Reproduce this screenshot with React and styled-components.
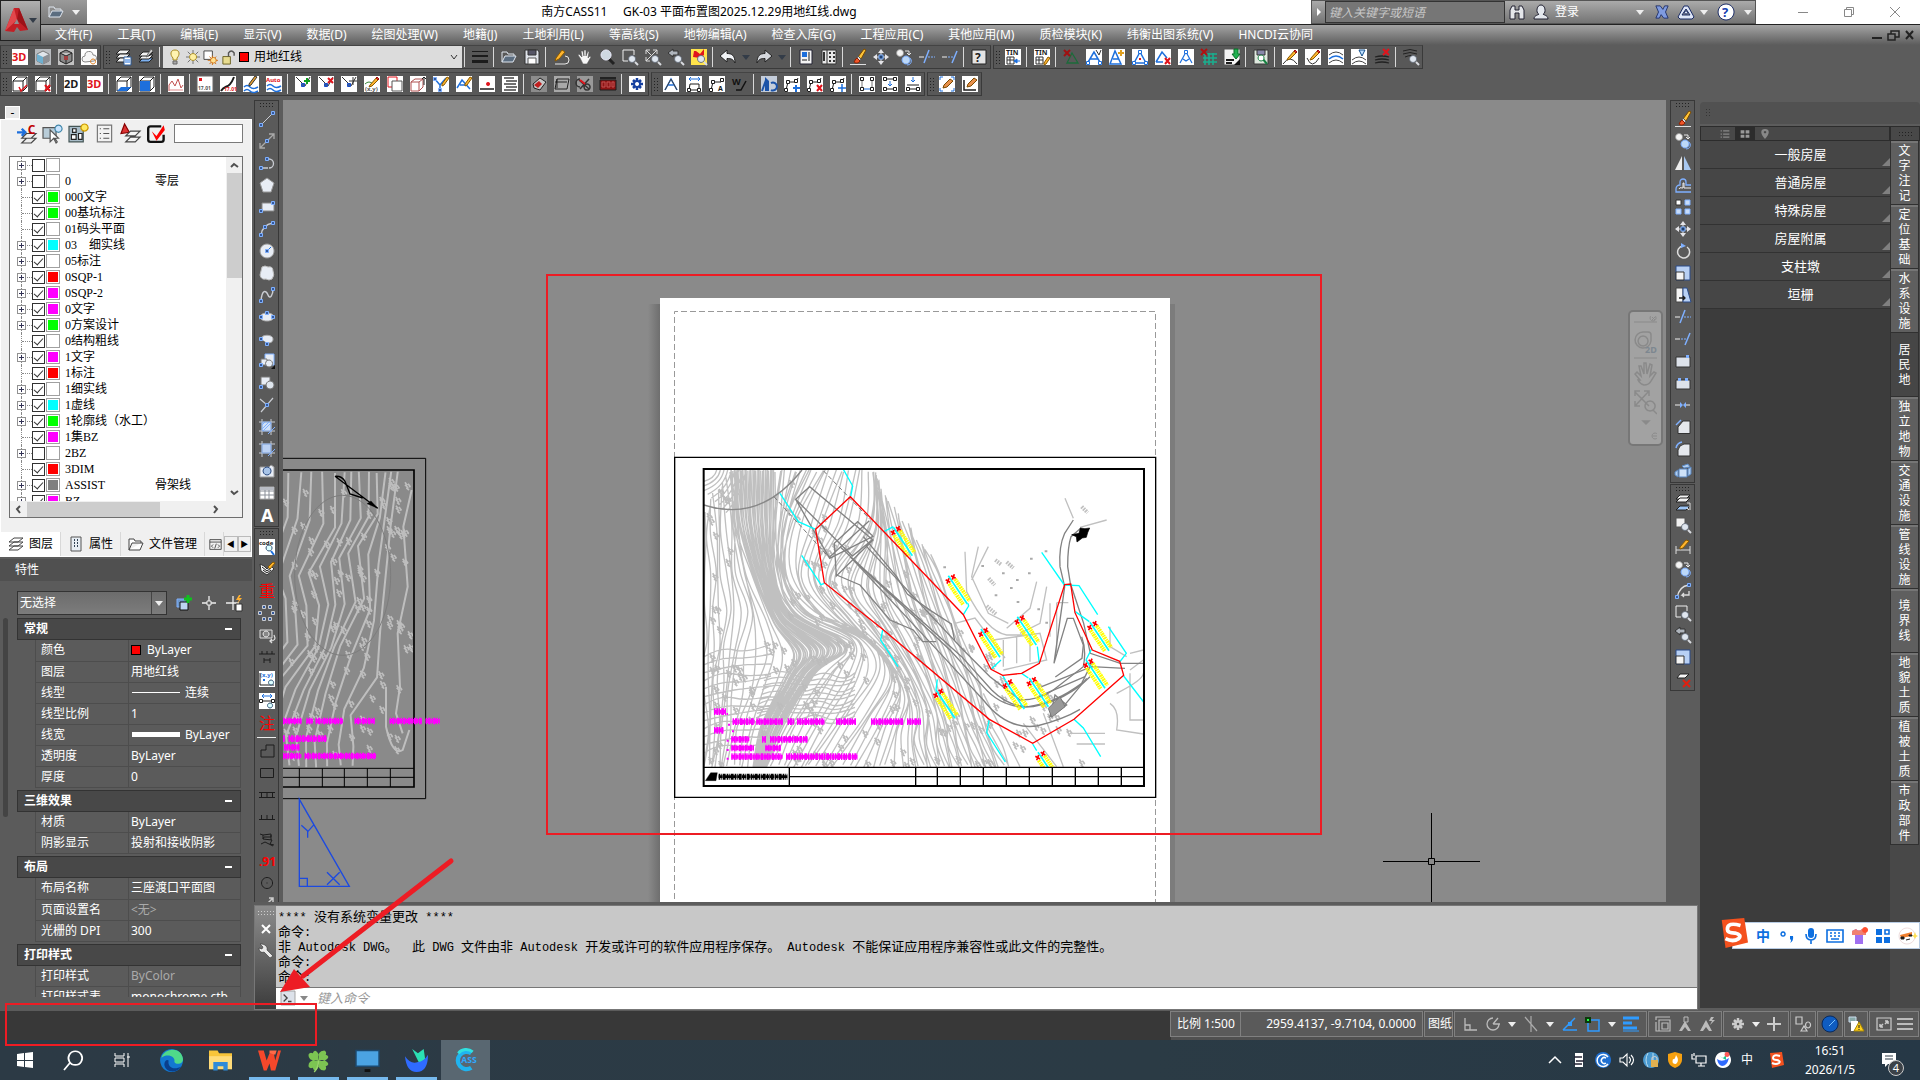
import React, { useState } from "react";
import styled, { createGlobalStyle, css } from "styled-components";

const GlobalStyle = createGlobalStyle`
  *, *::before, *::after { box-sizing: border-box; }
  body {
    margin: 0;
    overflow: hidden;
    background: #5c5c5c;
    font-family: "Noto Sans", "Noto Sans CJK SC", sans-serif;
    font-size: 12px;
    line-height: 16px;
  }
  button, input, select { font: inherit; color: inherit; }
  button { margin: 0; padding: 0; border: 0; background: none; }
  svg { display: block; flex: none; }
  table { border-collapse: collapse; }
  ul { list-style: none; margin: 0; padding: 0; }
`;

// ---------------------------------------------------------------- icons
// every shape is [path, stroke, fill, strokeWidth] or { t, x, y, s, c } for a text

const K = "#1c1c1c";
const G = "#c9ccd2";
const B = "#1d6fdc";
const LB = "#7fb0ff";
const R = "#e0141c";
const P = "#e8edf5";

const tile = ["M0 0h16v16H0z", null, "#fff"];
const lens = [
  ["M13 13l3 3", "#d8dbe0", null, 2],
  ["M10 6.500a3.500 3.500 0 1 0 .1 0z", "#6c7480", "#dfe6ef"],
];
const pencil = [
  ["M6 9L13 1l2 2-7 7-3 1z", "#8a5a00", "#ffb52e"],
  ["M12 2l1-1 2 2-1 1z", "#a01010", "#e8432c"],
];
const redX = ["M10 9l5 6M15 9l-5 6", R, null, 2];
const node = (x, y, c = K) => [`M${x - 1.5} ${y - 1.5}h3v3h-3z`, c, "#fff"];
const dot = (x, y, c = LB) => [`M${x - 1.5} ${y - 1.5}h3v3h-3z`, c, "#355a9c"];
const box = [
  ["M1 5h10v10H1zM1 5l4-4h10l-4 4M15 1v10l-4 4", K, null],
];
const layer = (y, f = "#f2f2f2") => [`M5 ${y}h10l-4 4H1z`, "#222", f];
const copyCircles = [
  ["M4 0.500a3.500 3.500 0 1 0 .1 0z", "#999", "#f4f4f4"],
  ["M9 2h4v4m-2-2l2 2 2-2", "#e8e8e8", null],
  ["M10 7a4 4 0 1 0 .1 0z", LB, "#bcd8f8"],
  ["M14 9a4 4 0 0 1-3 7", LB, null],
];
const moveArrows = [
  ["M8 0l3 4H5zM8 16l3-4H5zM0 8l4-3v6zM16 8l-4-3v6z", null, "#e4e4e8"],
  ["M8 3v10M3 8h10", "#e4e4e8", null],
  ["M6 6h4v4H6z", LB, "#20406c"],
];
const brush = [
  ["M8 8l6-8 2 1-5 9z", "#7a4a00", "#ffc438"],
  ["M8 7l3 3-1 2-3-3z", "#555", "#ddd"],
  ["M7 9l3 3c-2 3-5 2-6 1 1-1 1-3 3-4z", "#8c2000", "#f0562a"],
  ["M0 15.500h16", "#e0e0e0", null],
];
const contour = (y) => [`M1 ${y}q7-6 14 0`, "#444", null];
const poly = [["M2 14L4 6h8l2-4", K, null], node(2, 14), node(4, 6), node(12, 5)];
const vbase = [["M1 1l9 9 5-9", "#333", null], dot(8, 9, "#1a4ec8")];

const ICONS = {
  t3d: [tile, { t: "3D", x: 0, y: 12, s: 11, c: R }],
  t2d: [tile, { t: "2D", x: 0, y: 12, s: 11, c: K }],
  cube: [["M0 0h16v16H0z", null, "#b9bcc0"], ["M2 5l6-3 6 3v7l-6 3-6-3z", "#777", "#e0e5ea"], ["M2 5l6 3v7l-6-3z", null, "#6fb0d0"], ["M8 8l6-3v7l-6 3z", null, "#8c8f94"]],
  cube2: [["M0 0h16v16H0z", null, "#c2c2c2"], ["M2 4l6-3 6 3v8l-6 3-6-3zM2 4l6 3 6-3M8 7v8", "#222", "#888"], ["M6 7h4v4H6z", null, "#a04040"]],
  cloud: [tile, ["M4 13a3 3 0 0 1 0-6 4 4 0 0 1 8-1 3 3 0 0 1 1 6z", "#888", "#f6f6f6"], ["M12 10a2.500 2.500 0 1 0 .1 0z", "#e08020", null]],
  layers: [layer(1), layer(5), layer(9), ["M9 8h7v8H9z", "#2a5a9a", "#fff"], ["M10 11h5M10 13h5", B, null]],
  layers2: [layer(9, "#7db0ee"), layer(6), layer(3), ["M13 0l2 2-5 5-2 1z", "#666", "#ccc"]],
  weight: [["M0 2.500h16", K, null, 1], ["M0 7h16", K, null, 2], ["M0 12.500h16", K, null, 3]],
  open: [["M1 13V3h5l1 2h6v2", "#dfe6ef", null], ["M1 13l3-6h11l-3 6z", "#dfe6ef", "#5b6d80"]],
  save: [["M1 1h13l1 2v12H1z", "#333", "#dfe3ea"], ["M4 1h8v5H4z", "#333", "#556"], ["M4 9h8v6H4z", "#555", "#fff"]],
  pencil: [["M2 15h10a4 4 0 0 0 0-8", "#e8e8e8", null], ["M3 9L9 1l3 2-6 7-4 2z", "#8a5a00", "#ffb52e"]],
  hand: [["M4 9L2 6l1-1 3 3-1-6h2l1 5V1h2v6l2-5 1 1-1 6 2-2 1 1-4 7H7z", "#555", "#f6f6f6", 0.6]],
  zoom: [["M10 10l5 5", "#222", null, 3], ["M7 1a5 5 0 1 0 .1 0z", "#eef", "#cfd8e2"]],
  zoomWin: [["M1 1h11v5M1 1v11h5", "#eee", null], ...lens],
  zoomExt: [["M1 1l12 12M12 1L1 12M1 5V1h4M8 1h4v4M1 8v4h4", "#ddd", null], ...lens],
  zoomPrev: [["M0 4l5-4v2h5v4H5v2z", "#333", "#aeb4bc"], ...lens],
  zoomRed: [["M0 0h16v16H0z", null, "#ffe34a"], ["M2 8l1-6h2l4 3 4-5v6l-4 3z", null, R], ...lens],
  undo: [["M0 7l7-6v3.500c5 0 8 2 8 9.500-2-4-4-4.500-8-4.500V13z", "#222", "#f0f2f5"]],
  redo: [["M16 7L9 1v3.500c-5 0-8 2-8 9.500 2-4 4-4.500 8-4.500V13z", "#222", "#d4d7dc"]],
  calc: [["M2 1h12v14H2z", "#223", "#f4f4f4"], ["M4 3h5v5H4z", null, B], ["M11 3v9M4 11h5", K, null]],
  palette: [["M1 1h14v14H1z", "#333", "#e8e8e8"], ["M6 1v14", "#333", null], ["M3 3v9M8 4h2M12 4h2M8 8h2M12 8h2M8 12h2M12 12h2", "#333", null, 2]],
  brush,
  move: moveArrows,
  copy: copyCircles,
  trim: [["M0 8h5", "#eee", null], ["M9 8h2M12 8h2M15 8h1", LB, null], ["M5 14L10 1", LB, null, 1.5]],
  extend: [["M0 8h5", "#eee", null], ["M6 8h2M9 8h2", LB, null], ["M10 14L15 2", LB, null, 1.5]],
  help: [["M1 1h14v14H1z", "#222", "#e4e4e4"], { t: "?", x: 4, y: 13, s: 12, c: K }],
  tin: [tile, { t: "TIN", x: 1, y: 6, s: 7, c: K }, ["M2 8h7v7H2zM2 11h7M5 8v7", "#333", null], ["M9 12h6m-6 0l3-2v4z", B, B]],
  tinPen: [tile, { t: "TIN", x: 1, y: 6, s: 7, c: K }, ["M2 8h7v7H2zM2 11h7M5 8v7", "#333", null], ["M10 14l4-6 2 1-4 6-2 1z", "#8a5a00", "#ffb52e"]],
  triX: [["M4 14l5-10 6 10z", "#1b6b3a", null, 1.3], ["M1 1l6 6M7 1L1 7", "#a01010", null, 2]],
  triA: [tile, ["M1 15L8 3l7 12M4 10h8", B, null, 1.5], ["M10 1l3 5 2-5", "#333", null], node(2, 14, B), node(14, 14, B)],
  triB: [tile, ["M1 15L6 2l6 13zM4 10h6", B, null, 1.5], ["M12 1v6M9 4h6", "#e0a020", null, 2]],
  triC: [tile, ["M2 14L8 3l6 11z", B, null, 1.5], node(8, 3, B), node(2, 14, B), node(14, 14, B), ["M7 9h2v2H7z", null, R]],
  triD: [tile, ["M1 13L7 3l5 6M1 13h7", B, null, 1.5], redX],
  triE: [tile, ["M2 14L8 3l6 11M5 10l3 2 3-2", B, null, 1.2], node(8, 3, B)],
  grid: [["M2 5h14M2 9h14M2 13h14M4 4v12M8 4v12M12 4v12", "#19b090", null, 1.5], ["M0 0l6 6M6 0L0 6", "#b01010", null, 2]],
  down: [["M0 0h16v16H0z", "#555", "#f4f4f4"], ["M10 0h4v5h2l-4 5-4-5h2z", "#087028", "#20b050"], ["M2 11h8M2 14h6", K, null, 2], ["M16 10v6h-6z", null, "#111"]],
  diskLens: [["M1 1h14v14H1z", "#3a3a3a", "#dfe9df"], ["M4 1h8v5H4z", "#333", "#88a"], ["M9 9l5 6", "#158040", null, 2], ["M8 6a3 3 0 1 0 .1 0z", "#158040", "#fff"]],
  penCurve: [tile, ["M1 15q7-10 14 0", "#333", null], ...pencil],
  penCirc: [tile, ["M2 9q5 12 12 0", "#333", null], ...pencil],
  arcs: [tile, contour(6), ["M1 10q7-6 14 0", B, null, 1.5], contour(14)],
  arcsV: [tile, contour(11), contour(15), ["M8 1h6l-3 6z", "#124e8c", "#bfe0ff"]],
  arcsX: [["M1 8q7-2 14 0M1 11q7-2 14 0M1 14q7-2 14 0", "#222", null, 1.3], ["M9 0l6 6M15 0L9 6", R, null, 2]],
  arcsL: [["M0 2q7-3 14 0M0 5q7-3 14 0M2 8q7-3 10 0", "#222", null], ...lens],

  boxCheck: [tile, ...box, ["M7 11l2 4 6-6", R, null, 1.5]],
  boxX: [tile, ...box, redX],
  boxBase: [tile, ...box, ["M1 15l4-4h10l-4 4z", null, B]],
  boxFront: [tile, ...box, ["M1 5h10v10H1z", null, B]],
  chart: [tile, ["M1 15V9l3-4 3 5 3-7 3 9 2-3", "#c05050", null], ["M1 14h14", "#d88", null]],
  ptNum: [["M0 0h16v16H0z", "#666", "#fff"], ["M2 2h3v3H2z", null, R], { t: "17.01", x: 1, y: 14, s: 5, c: "#555" }],
  curveNum: [tile, ["M1 15C5 8 9 14 14 1", K, null, 2], { t: "17.01", x: 4, y: 15, s: 5, c: R }],
  wavePen: [tile, ["M1 11q3-3 6 0t8 0M1 15q3-3 6 0t8 0", B, null, 1.5], ["M6 8l6-8 2 1-6 8-2 1z", "#333", "#e8a030"]],
  waveAuto: [tile, { t: "Auto", x: 0, y: 6, s: 6, c: R }, ["M1 10q3-3 6 0t8 0M1 14q3-3 6 0t8 0", B, null, 1.5]],
  vPlus: [tile, ...vbase, ["M12 2v6M9 5h6", "#10a020", null, 2]],
  vX: [tile, ...vbase, ["M10 2l5 5M15 2l-5 5", R, null, 2]],
  vMove: [tile, ...vbase, ["M12 1v8M8 5h8", "#333", null]],
  grassPen: [tile, ["M1 8q4-4 8 0", "#3a8a3a", null], ...pencil, { t: "(x,y)", x: 1, y: 15, s: 6, c: "#555" }],
  copyRed: [tile, ["M1 1h9v10H1z", R, null], ["M5 5h10v10H5z", "#555", "#fff"]],
  boxRed: [tile, ["M1 6h8v9H1zM1 6l4-3h8l-4 3M13 3v8l-4 4", "#b05050", null], ["M14 9V1m-2 2l2-2 2 2", K, null]],
  yPen: [tile, ["M1 2l6 7v6M7 9l6-7", B, null, 1.5], dot(2, 3), dot(7, 14), ["M9 8l5-7 2 1-5 7-2 1z", "#8a5a00", "#ffb52e"]],
  aPen: [tile, ["M1 12L6 4l8 9M4 9h7", B, null, 1.5], ["M9 8l5-7 2 1-5 7-2 1z", "#8a5a00", "#ffb52e"]],
  linePt: [tile, ["M1 13h14", K, null, 1.5], ["M9 6a2 2 0 1 0 .1 0z", null, R]],
  list: [tile, ["M2 2h10M4 5h11M2 8h12M4 11h11M2 14h12", "#444", null, 1.5]],
  disk: [["M0 0h16v16H0z", null, "#8c8c8c"], ["M2 8l7-6 6 4-6 8-6-2z", "#222", "#c8c8c8"], ["M3 9l5-4 3 3-4 4z", null, "#c02020"]],
  prism: [["M0 0h16v16H0z", null, "#a8a8a8"], ["M3 3h12l-2 10H1zM1 6h12M3 3v9", "#222", null]],
  slash: [["M0 0h16v16H0z", null, "#999"], ["M2 4l10 9M12 3L3 13M3 3a4 4 0 0 0 0 8M10 8a3 3 0 1 0 .1 0z", "#333", null, 1.5], ["M3 4l5 4", R, null, 2]],
  rack: [["M0 4h16v10H0z", K, "#8e1414"], ["M2 6h3v5H2zM7 6h3v5H7zM12 6h2v5h-2z", "#c05050", null], ["M0 2h16", "#222", null, 2]],
  gear: [tile, ["M8 2v12M2 8h12M4 4l8 8M12 4l-8 8", "#153fa0", null, 2.5], ["M8 5a3 3 0 1 0 .1 0z", "#153fa0", "#fff", 2]],
  nodeA: [tile, ["M2 14L8 3l6 11M5 9h6", B, null, 1.5], ["M2 14L8 3l6 11", "#444", null]],
  nodeDim: [tile, ["M3 14L4 8h9v6z", K, null], ["M3 3h11M5 1L3 3l2 2M12 1l2 2-2 2", B, null], node(3, 14), node(13, 14)],
  nodeR: [tile, ["M2 14L4 6h8", K, null], node(2, 14), node(4, 6), node(13, 4), { t: "A", x: 9, y: 15, s: 7, c: K }],
  wDark: [{ t: "W", x: 0, y: 9, s: 9, c: "#111" }, ["M4 14h5l5-9", "#111", null, 1.5]],
  blueI: [["M0 0h16v16H0z", null, "#c4cdda"], ["M4 1l4 4v10H4z", null, "#1b53a8"], ["M1 15L5 4M10 7a4 4 0 1 1 0 7", "#1b53a8", null, 2]],
  polyPlus: [tile, ...poly, ["M12 9v7M9 12h7", B, null, 2]],
  polyX: [tile, ...poly, redX],
  polyMove: [tile, ...poly, ["M12 8v8M8 12h8", B, null, 1.5]],
  nodeBox: [tile, ["M3 3v10M13 3v10", "#777", null], ["M5 13h6", B, null], node(3, 3), node(13, 3), node(3, 13), node(13, 13)],
  nodeH: [tile, ["M3 3h10M3 13h10", K, null], node(3, 3), node(13, 3), node(3, 13), node(13, 13), ["M8 5v5m-2-2l2 2 2-2", B, null]],
  nodeDown: [tile, ["M2 9h12M2 13h12", K, null], ["M8 1v5m-2-2l2 2 2-2", B, null], node(3, 13), node(13, 13)],
  brushTile: [tile, ["M1 4V1h3M12 1h3v3M1 12v3h3M15 12v3h-3", B, null], ["M5 9l6-6 3 2-6 6-4 1z", "#7a4a00", "#e8904c"]],
  brushAxis: [tile, ["M2 4v10h12", K, null, 1.5], ["M6 8l6-6 3 2-6 6-4 1z", "#7a4a00", "#e8904c"]],

  line: [["M2 14L14 2", G, null], dot(2, 14), dot(14, 2)],
  xline: [["M1 15L15 1M1 10v5h5M10 1h5v5", "#aaa", null, 1.3], dot(8, 8)],
  pline: [["M1 13h8M8 4h2a4 4 0 0 1 0 9", G, null, 1.3], dot(2, 13), dot(8, 4)],
  polygon: [["M8 1l7 5-3 9H4L1 6z", "#999", P]],
  rect: [["M3 4h12v8H3z", "#888", P], dot(2, 12), dot(14, 4)],
  arc: [["M2 14C3 6 8 3 14 2", G, null, 1.5], dot(2, 14), dot(6, 6), dot(14, 2)],
  circle: [["M8 1a7 7 0 1 0 .1 0z", "#999", P], ["M8 8l4-4", B, null], dot(8, 8)],
  cloudR: [["M3 2q3-2 6 0 5-1 5 4 2 4-1 8-3 2-6 0-5 1-6-4 1-4 2-8z", "#bbb", P]],
  spline: [["M2 14C3 2 7 3 9 8s5 0 5-6", G, null, 1.5], dot(2, 14), dot(14, 2)],
  ellipse: [["M8 4c9 0 9 8 0 8s-9-8 0-8z", "#aaa", P], dot(2, 8), dot(8, 4), dot(14, 8)],
  ellArc: [["M2 8c0-5 12-5 12 0 0 4-4 4-6 4", "#aaa", P], dot(2, 8), dot(8, 13)],
  insert: [["M6 1h9v11H6z", LB, P], ["M2 6h6v6H2z", "#777", P], ["M10 7a3.500 3.500 0 1 0 .1 0z", "#777", P], ["M16 12v4h-4z", null, "#111"], dot(2, 12)],
  block: [["M2 2h9v8H2z", "#777", P], ["M11 6a4 4 0 1 0 .1 0z", "#777", "#dfe6ee"], dot(2, 12)],
  point: [["M1 2l7 6 6-7M8 8l-6 7", G, null, 1.2], dot(8, 8)],
  hatch: [["M3 0v16M12 0v16M0 3h16M0 12h16", G, null], ["M3 3h9v9H3z", "#7a9fd8", "#cfe0f8"], ["M9 15l7-7M3 6l3-3M3 10l7-7M4 12l8-8", LB, null]],
  gradient: [["M3 0v16M12 0v16M0 3h16M0 12h16", G, null], ["M3 3h9v9H3z", "#7a9fd8", "#bcd2f4"], ["M9 15l7-7", LB, null]],
  region: [["M1 4h9l2-2 3 2v10H1z", "#999", P], ["M8 4a4 4 0 1 0 .1 0z", "#2a4a80", "#a8c4e8"]],
  table: [["M1 2h14v12H1z", "#aaa", "#fff"], ["M1 6h14M1 10h14M6 2v12M10 2v12", "#8a8f98", null], ["M1 2h14v3H1z", null, "#b8bcc4"]],
  textA: [{ t: "A", x: 2, y: 15, s: 18, c: "#fff" }],
  code: [tile, { t: "code", x: 0, y: 6, s: 6, c: K }, ["M12 12l3 4", B, null, 2], ["M10 6a3 3 0 1 0 .1 0z", "#357", "#dff"]],
  tag: [["M1 3l1 7 6 4 7-6-3-3-4 3-3-3z", "#333", "#f4f4f4"], ["M3 6l5 4 4-3M4 9l4 3 4-3", K, null], ["M9 6l5-5 2 1-5 6z", "#8a5a00", "#ffb52e"]],
  chong: [{ t: "重", x: 0, y: 14, s: 16, c: "#f00" }],
  dots: [dot(5, 2, G), dot(11, 2, G), dot(1, 8, G), dot(14, 8, G), dot(5, 14, G), dot(11, 14, G)],
  camera: [["M1 3h12v8H1z", "#ddd", "#666"], ["M7 4a3 3 0 1 0 .1 0z", "#eee", "#888"], ["M15 8q3 6-4 6m2-2l-2 2 2 2", "#ddd", null, 1.3]],
  railH: [["M0 5h16M3 2v3M8 2v3M13 2v3M5 9v5M11 9v5M5 11h6", K, null]],
  xy: [tile, { t: "(x,y)", x: 1, y: 6, s: 6, c: B }, ["M1 14h14M1 2v12", K, null], ["M4 8h2v2H4z", null, B], ["M12 9a2.500 2.500 0 1 0 .1 0z", "#357", "#dff"]],
  dim: [tile, ["M3 3h10M5 1L3 3l2 2M11 1l2 2-2 2", B, null], ["M1 8h14", K, null], node(2, 8), node(14, 8), ["M11 10a2.500 2.500 0 1 0 .1 0z", "#357", "#dff"]],
  zhu: [{ t: "注", x: 0, y: 14, s: 16, c: "#f00" }],
  step: [["M2 14V7h5V2h8v12z", K, null]],
  rectK: [["M1.500 3.500h13v9h-13z", K, null]],
  rail: [["M0 5.500h16M0 10.500h16M2.500 5v5M8 5v5M13.500 5v5", K, null]],
  comb: [["M0 10.500h16M2.500 6v4M8 6v4M13.500 6v4", K, null]],
  scribble: [["M1 3l3 1 8-1v3H5l-1 2 9 1-2 4 4 1M4 4v4M2 13l4-2 8 4M12 4v5", K, null]],
  n91: [{ t: ".91", x: 0, y: 13, s: 12, c: "#f00" }],
  circK: [["M8 2.500a5.500 5.500 0 1 0 .1 0zM7.500 8h1", K, null]],
  corner: [["M10 1h4v4M14 1l-6 6", "#ccc", null, 1.5]],
  mirror: [["M7 1v14H0z", null, "#ededed"], ["M9 1v14h7z", null, "#a8c8f0"], ["M8 0v16", "#555", null]],
  offset: [["M1 12c0-3 2-4 4-4V5c0-4 6-4 6 0v3h5M1 12v3h15", LB, null, 1.3], ["M4 12q0-2 4-1V6h1v5h7", "#eee", null]],
  array: [["M1 1h5v5H1z", "#333", "#fff"], ["M10 1h5v5h-5zM1 10h5v5H1zM10 10h5v5h-5z", LB, "#c8dcf8"]],
  rotate: [["M8 3a6 6 0 1 0 4 1", "#ddd", null, 1.5], ["M6 0l5 3-5 2z", null, LB]],
  scale: [["M1 1h14v14H1z", "#2a4a88", "#b8d0f4"], ["M1 7h8v8H1z", "#333", "#f4f4f4"]],
  stretch: [["M1 1h7v14H1z", "#444", "#f4f4f4"], ["M8 1h4l4 14H8z", "#2a4a88", "#b8d0f4"], ["M4 11h6m-2-2l2 2-2 2", K, null, 1.3]],
  breakP: [["M1 4h14v10H1z", "#333", "#dde2ea"], ["M11 2h3v3h-3z", null, LB]],
  breakG: [["M1 5h14v9H1z", "#333", "#dde2ea"], ["M3 3h3v3H3zM10 3h3v3h-3z", null, LB]],
  join: [["M0 8h5M11 8h4", "#eee", null], ["M5 5l3 3-3 3zM11 5L8 8l3 3z", null, LB]],
  chamfer: [["M3 14.500V8l5-6h7v12.500z", "#333", "#e4e7ec"], ["M1 6l5-5", LB, null, 1.5]],
  fillet: [["M3 15V9q1-5 6-6h6v12z", "#333", "#e4e7ec"], ["M1 7q1-5 6-6", LB, null, 1.5]],
  explode: [["M4 6h8v8H4z", "#5a86c0", "#cfe2f8"], ["M7 3l6-2 2 3-6 1zM0 9l3-2v7l-3-2zM13 6l3-2v7l-3 2z", "#5a86c0", "#b0cef0"]],
  layerArrow: [layer(0), layer(3), layer(11, "#9cc4f4"), ["M12 8h3v7m-3-2l2 2", "#ddd", null]],
  rectLens: [["M1 1h9v9H1z", "#555", "#f0f0f0"], ...lens],
  dimPen: [["M1 7v8M15 7v8M1 11h14", "#ddd", null], ["M5 8l6-7 3 1-6 7-3 1z", "#8a5a00", "#ffb52e"]],
  arcBack: [["M2 15C3 8 6 3 14 2M14 8v4H7l2-2m-2 2l2 2", "#ddd", null, 1.3], dot(2, 14), dot(14, 2)],
  layerX: [["M5 3h9l-4 4H2z", "#222", "#f8f8f8"], ["M8 9l7 7M15 9l-7 7", "#e02010", null, 2]],

  bulb: [["M8 1c5 0 5 5 2 8v2H6V9C3 6 3 1 8 1z", "#a88a20", "#fff3b0"], ["M6 12h4v3H6z", "#666", "#aaa"]],
  sun: [["M8 0v16M0 8h16M2 2l12 12M14 2L2 14", "#666", null], ["M8 4a4 4 0 1 0 .1 0z", "#a88a20", "#fff0a0"]],
  vpSun: [["M1 1h9v9H1z", "#444", "#fff"], ["M10 6v10M5 11h11M7 7l7 8M14 7l-7 8", "#d07010", null], ["M11 8a3 3 0 1 0 .1 0z", "#d07010", "#ffe090"]],
  unlock: [["M2 7h8v8H2z", "#6a6020", "#e8dc90"], ["M8 7V3q3-4 6 0v3", "#555", null, 1.5]],
  binoc: [["M1 15V6l2-4h3v4h4V2h3l2 4v9h-5V9H6v6z", "#223", "#e4e6ea"]],
  person: [["M8 1c5 0 5 9 2 9 0 1 5 1 5 5H1c0-4 5-4 5-5C3 10 3 1 8 1z", "#223", "#e4e8ee"]],
  xchg: [["M1 1h5l3 4 2-4h4l-3 7 3 7h-5l-3-4-2 4H1l3-7z", "#1b2c66", "#7f9be0"]],
  a360: [["M6 2h4l6 11-2 2H2l-2-2zM8 5l4 6H4zM8 7a1.500 1.500 0 1 0 .1 0z", "#1b2c66", "#dfe6f8", 1]],
  helpBlue: [["M8 0a8 8 0 1 0 .1 0z", "#1b2c66", "#fff"], { t: "?", x: 4, y: 13, s: 13, c: "#1540b0" }],
  layC: [["M0 7h7m-3-3l3 3-3 3", B, null, 2], ["M8 8h8l-4 4H4zM8 12h8l-4 4H4z", "#444", "#eee"], { t: "C", x: 9, y: 8, s: 10, c: "#c00000" }],
  pick: [["M0 3h11v9H0z", "#555", "#b8ccd8"], ["M13 1a3 3 0 1 0 .1 0z", "#48a", "#c8e4ff"], ["M6 5v10l3-3 2 4 1-1-2-3h3z", "#555", "#fff"]],
  pickBulb: [["M0 2h12v13H0z", "#455", "#a8bcc8"], ["M3 4h3v3H3zM2 9h4v4H2zM8 8h3v5H8z", "#222", "#fff"], ["M13 0a3 3 0 1 0 .1 0z", "#c90", "#ffe860"]],
  sheet: [["M2 1h12v14H2z", "#777", "#f2f2f2"], ["M7 4h5M7 8h5M7 12h5M4 4h1M4 8h1M4 12h1", "#555", null]],
  layRed: [["M0 8L3 0l4 7z", "#800", "#d33"], ["M8 6h8l-4 4H4zM8 11h8l-4 4H4z", "#444", "#f4f4f4"]],
  checkBig: [["M14 9v4q0 2-2 2H3q-2 0-2-2V4q0-2 2-2h9", "#111", null, 2], ["M4 6l4 4 6-9 1 4-7 9z", null, "#f00"]],
  sheets: [["M6 2h9l-5 4H1zM6 6h9l-5 4H1zM6 10h9l-5 4H1z", "#444", "#fff"]],
  doc: [["M3 1h10v14H3z", "#555", "#e8eef4"], ["M6 4h1M9 4h1M6 7h1M9 7h1M6 10h1M9 10h1", "#345", null, 2]],
  folder: [["M1 14V3h5l1 2h6v2M1 14l3-7h11l-3 7z", "#444", "#fff"]],
  codeWin: [["M1 2h14v12H1zM1 5h14M5 8l-2 2 2 2M11 8l2 2-2 2M9 7l-2 6", "#333", null]],
  addSel: [["M1 4h8v8H1z", LB, "#6d96c8"], ["M4 7h8v8H4z", "#111", "#bcd4f0"], ["M12 0v8M8 4h8", "#10c020", null, 3]],
  cross: [["M8 1v14M1 8h14", "#eee", null, 1.3], ["M6 6h4v4H6z", "#eee", "#5c5c5c"]],
  crossBolt: [["M7 1v14M0 8h13", "#eee", null, 1.3], ["M13 0l-3 5h3l-2 4 5-6h-3l2-3z", null, "#ffb030"], ["M10 9h6v7h-6z", "#333", "#fff"]],
  wrench: [["M2 1l3 3-1 2-3-1c0 4 3 5 5 4l6 6 3-2-6-6c1-3-2-6-6-6z", "#333", "#e8e8e8", 0.6]],
  cmd: [["M0 0h16v16H0z", "#999", "#dde2ea"], ["M3 4l4 4-4 4M8 12h4", "#444", null, 1.5]],

  ortho: [["M3 2v12h12M3 9h5v5", "#bbb", null, 1.3]],
  polar: [["M8 2a6 6 0 1 0 6 6M8 8h7M8 8l5-6", "#bbb", null, 1.3]],
  iso: [["M8 0v16M2 1l12 14", "#aaa", null, 1.2]],
  track: [["M1 14L13 2M1 14h14", "#2f9bff", null, 1.5], ["M6 6h4v4H6z", null, "#2f9bff"]],
  osnap: [["M3 4h11v11H3z", "#2f9bff", null, 1.5], ["M0 1h6v6H0z", null, "#0a3a0a"], ["M2 3h2v2H2z", null, "#2f4"]],
  lwt: [["M0 2h16M0 7h9M0 12h14", "#2f9bff", null, 3], ["M0 15h16", "#2f9bff", null]],
  vp: [["M1 4V1h14M1 6v9h14V4H4v11M7 7h6v6H7z", "#bbb", null, 1.2]],
  annot: [["M8 5l-6 10h3l3-4 3 4h3z", null, "#bbb"], ["M7 1h4v5H7z", "#bbb", "#5c5c5c"]],
  annot2: [["M7 4L1 15h3l3-4 3 4h3z", null, "#bbb"], ["M12 1l-2 4h3l-2 4 5-5h-3l2-3z", null, "#bbb"]],
  gearW: [["M8 2v12M2 8h12M4 4l8 8M12 4l-8 8", "#ccc", null, 2.5], ["M8 5.500a2.500 2.500 0 1 0 .1 0z", "#ccc", "#555", 2.5]],
  plus: [["M8 1v14M1 8h14", "#ccc", null, 2]],
  shapes: [["M1 1h6v7H1zM6 15l3-5 3 5zM13 6a2.500 3 0 1 0 .1 0z", "#ccc", null, 1.2]],
  blueC: [["M8 0a8 8 0 1 0 .1 0z", "#08285a", "#0f5cc0"], ["M7 10l6-6", "#7cc4ff", null]],
  warn: [["M1 1h7v5H1z", "#cde", "#8aa"], ["M3 5h7v10H3z", null, "#fff"], ["M11 6l5 9H6z", "#a80", "#ffd020"], ["M11 9v3M11 13v1", K, null]],
  full: [["M1 2h14v12H1z", "#ccc", null, 1.2], ["M4 11V8m0 3h3M12 5v3m0-3H9M4 11l3-3M12 5L9 8", "#ccc", null, 1.5]],
  menu: [["M0 3h16M0 8h16M0 13h16", "#bbb", null, 2]],

  win: [["M0 2l7-1v7H0zM8 1l8-1v8H8zM0 9h7v6l-7-1zM8 9h8v7l-8-1z", null, "#fff"]],
  search: [["M9 1a5.500 5.500 0 1 0 .1 0zM5 10l-5 6", "#fff", null, 1.4]],
  taskview: [["M0 1v3h9V1M0 15v-3h9v3M0 6h9v4H0zM13 1v14M12 5h3", "#fff", null, 1]],
  edge: [["M8 0a8 8 0 1 0 .1 0z", null, "#1378d0"], ["M1 6C3-1 15-2 16 7c0 4-5 4-6 2 1-4-5-6-9-3z", null, "#4fd98a"], ["M6 8c-1 5 4 7 9 4-3 5-11 5-12-1 0-3 2-4 3-3z", null, "#0a3f8c"]],
  explorer: [["M0 1h6l1 2h9v11H0z", null, "#f8c53a"], ["M0 5h16v9H0z", null, "#ffdc7a"], ["M3 9h10v6h-3v-3H6v3H3z", null, "#2f8bd8"]],
  wps: [["M0 1h4l2 7 2-5h3l1 5 2-7h2l-4 14H9L8 10l-2 5H4z", null, "#f5482b"], ["M8 1h5l-1 3-4-1z", null, "#ff6a48"]],
  clover: [["M8 8Q1 9 1 4q1-2 3-1 1-3 3-1 2 2 1 6zM8 8Q7 1 12 1q2 1 1 3 3 1 1 3-2 2-6 1zM8 8q-7-1-7 4 1 2 3 1 1 3 3 1 2-2 1-6zM8 8q-1 7 4 7 2-1 1-3 3-1 1-3-2-2-6-1z", null, "#7cc452"], ["M8 8q0 5-3 8", "#9ad46c", null]],
  monitor: [["M0 1h16v11H0z", "#1c4a70", "#4ba3e3"], ["M6 14h4v2H6z", null, "#111"]],
  dove: [["M5 0l4 3 4-3 1 7-4 3z", null, "#2be0b4"], ["M0 5q4 6 9 4 4 0 7-5 0 12-8 12-7 0-8-11z", null, "#2f6bff"]],
  cass: [["M12 3a6 6 0 1 0 0 10", "#20b4f0", null, 3], ["M13 2a7 7 0 0 0-10 1", "#30e0e0", null, 2], { t: "ASS", x: 5, y: 10, s: 6, c: "#30a8ff" }],
  up: [["M2 11l6-6 6 6", "#fff", null, 1.5]],
  usb: [["M4 1h8v14H4z", null, "#fff"], ["M3 5h8M5 9h8M3 12h8", "#223", null, 1.5]],
  swirl: [["M8 0a8 8 0 1 0 .1 0z", null, "#1f6fd0"], ["M13 5a6 6 0 1 0 0 7M11 6a3 3 0 1 0 0 5", "#fff", null, 1.5]],
  volume: [["M1 6h3l4-4v12l-4-4H1zM10 5q3 3 0 6M12 3q5 5 0 10", "#fff", null, 1.1]],
  globe: [["M8 0a8 8 0 1 0 .1 0z", null, "#4a9ad0"], ["M5 1q-4 7 0 14M10 1v14", "#bde", null], ["M8 8h7v7H8z", null, "#e0b050"], ["M9 8V6q3-3 5 0v2", "#ccc", null, 1.2]],
  shield: [["M8 0l7 2v6q0 5-7 8-7-3-7-8V2z", null, "#f5a010"], ["M9 3q4 6 0 9-5 0-3-5 2 1 3-4z", null, "#fff"]],
  net: [["M5 4h10v7H5zM10 11v3M7 14h7M1 2v5h3M3 4V1", "#fff", null, 1.2]],
  doveC: [["M8 0a8 8 0 1 0 .1 0z", null, "#fff"], ["M4 4l4 2 3-3v5z", null, "#1ec890"], ["M2 7q5 4 12-1-2 8-7 8-4-1-5-7z", null, "#2f6bff"], ["M12 0a2.500 2.500 0 1 0 .1 0z", null, "#ff5a5a"]],
  sogou: [["M2 1l12-1 2 13-12 3z", null, "#f4511e"], ["M12 4Q5 2 5 6q0 2 4 2 4 1 2 3-3 2-7 0", "#fff", null, 2]],
  note: [["M0 1h14v11H6l-3 3v-3H0z", null, "#fff"], ["M3 4h8M3 7h8", "#2a3944", null]],
  mic: [["M8 0q3 0 3 3v4q0 3-3 3T5 7V3q0-3 3-3z", null, "#0d6fe0"], ["M3 6q0 6 5 6t5-6M8 12v4", "#0d6fe0", null, 1.6]],
  punct: [["M4 4a2 2 0 1 0 .1 0z", "#0d6fe0", null, 1.5], ["M11 8h3q1 5-3 7 2-3 0-4z", null, "#0d6fe0"]],
  keyboard: [["M0 2h16v12H0z", "#0d6fe0", "#fff", 1.6], ["M3 5h2M7 5h2M11 5h2M3 8h2M7 8h2M11 8h2M4 11h8", "#0d6fe0", null, 1.6]],
  shirt: [["M1 3l4-2q3 3 6 0l4 2v4h-3v9H4V7H1z", null, "#a070f0"], ["M1 3l4-2q3 3 6 0l4 2v4H1z", null, "#f08070"], ["M14-1a3 3 0 1 0 .1 0z", null, "#ff4f2e"]],
  apps: [["M1 1h6v6H1zM9 9h6v6H9zM1 9h6v6H1z", null, "#0d6fe0"], ["M10 2h4v4h-4z", "#0d6fe0", null, 1.6]],
  face: [["M8 0a8 8 0 1 0 .1 0z", "#edd", "#fff"], ["M1 7l12-3v4L2 10z", null, "#f08030"], ["M2 9h3v2H2zM10 7h3v1h-3zM7 12l4-1", K, K], ["M16 4l1 3 2 1-2 1-1 2-1-2-2-1 2-1z", null, "#ffe050"]],
  tabList: [["M1 3h2M1 8h2M1 13h2M5 3h10M5 8h10M5 13h10", "#888", null, 2]],
  tabGrid: [["M1 2h6v5H1zM9 2h6v5H9zM1 9h6v5H1zM9 9h6v5H9z", null, "#999"]],
  tabPin: [["M8 0q6 0 6 5 0 4-6 11Q2 9 2 5q0-5 6-5zm0 3a2 2 0 1 0 .1 0z", null, "#888"]],
};

const Icon = ({ name, size = 16 }) => (
  <svg width={size} height={size} viewBox="0 0 16 16" overflow="visible" aria-hidden="true">
    {ICONS[name].map((s, i) =>
      s.t ? (
        <text key={i} x={s.x} y={s.y} fontSize={s.s} fill={s.c} fontWeight={s.s === 16 ? 400 : 700}>
          {s.t}
        </text>
      ) : (
        <path key={i} d={s[0]} stroke={s[1] || "none"} fill={s[2] || "none"} strokeWidth={s[3] || 1} fillRule="evenodd" />
      )
    )}
  </svg>
);

const Caret = styled.span`
  width: 0;
  height: 0;
  flex: none;
  border: 4px solid transparent;
  border-top: 5px solid ${(p) => p.$color || "#eee"};
  border-bottom: 0;
`;

// ---------------------------------------------------------------- frame

const Page = styled.div`
  position: relative;
  height: 100vh;
  display: flex;
  flex-direction: column;
  overflow: hidden;
`;

const Header = styled.header`
  display: flex;
  flex: none;
  height: 45px;
`;

const AppButton = styled.button`
  width: 41px;
  height: 41px;
  flex: none;
  display: flex;
  align-items: center;
  justify-content: center;
  border: 1px solid #222;
  background: linear-gradient(#b0b0b0, #6a6a6a);
`;

const HeaderMain = styled.div`
  flex: 1;
  display: flex;
  flex-direction: column;
`;

const TitleBar = styled.div`
  display: flex;
  height: 24px;
  background: #fff;
`;

const QuickAccess = styled.div`
  width: 46px;
  display: flex;
  align-items: center;
  justify-content: center;
  gap: 8px;
  background: linear-gradient(#9a9a9a, #777);
`;

const Title = styled.h1`
  flex: 1;
  margin: 0;
  font-size: 12px;
  font-weight: 400;
  line-height: 24px;
  text-align: center;
  white-space: pre;
  color: #000;
`;

const InfoCenter = styled.div`
  width: 445px;
  display: flex;
  align-items: center;
  border: 1px solid #555;
  background: linear-gradient(#aaa, #747474);
  color: #fff;
`;

const InfoButton = styled.button`
  width: ${(p) => p.$w || 24}px;
  height: 22px;
  display: flex;
  align-items: center;
  justify-content: center;
`;

const Search = styled.input`
  width: 180px;
  height: 22px;
  padding: 0 3px;
  border: 1px solid #333;
  background: #767676;
  font-style: italic;
  &::placeholder { color: #c8c8c8; }
`;

const Login = styled.button`
  width: 97px;
  padding: 0 6px 0 2px;
  display: flex;
  align-items: center;
  justify-content: space-between;
`;

const WindowButton = styled.button`
  width: 46px;
  display: flex;
  align-items: center;
  justify-content: center;
  &:nth-last-child(3) { margin-left: 24px; }
  &:last-child { margin-right: 2px; }
`;

const MenuBar = styled.nav`
  display: flex;
  height: 21px;
  padding: 0 4px 0 2px;
  border-top: 1px solid #222;
  background: linear-gradient(#a4a4a4, #5c5c5c);
  a {
    padding: 0 13px 0 12px;
    line-height: 20px;
    color: #fff;
    text-decoration: none;
    white-space: nowrap;
  }
`;

const MdiButtons = styled.div`
  margin-left: auto;
  display: flex;
  align-items: center;
  gap: 4px;
`;

const Toolbars = styled.div`
  flex: none;
  height: 55px;
  display: flex;
  flex-direction: column;
  gap: 3px;
`;

const ToolbarRow = styled.div`
  display: flex;
  gap: 2px;
`;

const Bar = styled.div`
  display: flex;
  align-items: center;
  height: 24px;
  border: 1px solid #3a3a3a;
  border-top-color: #444;
  background: #585858;
`;

const grip = css`
  background-image: radial-gradient(#222 40%, transparent 45%);
  background-size: 3px 3px;
`;

const Grip = styled.span`
  ${grip}
  width: 6px;
  height: 15px;
  margin-left: 1px;
`;

const Tool = styled.button`
  width: 23px;
  height: 22px;
  flex: none;
  display: flex;
  align-items: center;
  justify-content: center;
`;

const Sep = styled.span`
  width: 1px;
  height: 20px;
  margin: 0 3px 0 2px;
  background: #d8d8d8;
`;

const LayerBox = styled.label`
  width: 299px;
  height: 22px;
  display: flex;
  align-items: center;
  gap: 3px;
  padding: 0 4px;
  background: #dcdcdc;
  color: #000;
  svg:last-child { margin-left: auto; }
  select {
    flex: 1;
    border: 0;
    padding: 0;
    appearance: none;
    background: transparent;
    font-size: 12px;
  }
`;

const Swatch = styled.span`
  width: 10px;
  height: 10px;
  margin-right: ${(p) => p.$gap || 2}px;
  border: 1px solid #000;
  background: #f00;
`;

const Main = styled.main`
  flex: 1;
  min-height: 0;
  display: flex;
`;

const LeftDock = styled.aside`
  width: 252px;
  flex: none;
  display: flex;
  flex-direction: column;
  min-height: 0;
`;

const Collapse = styled.button`
  width: 15px;
  height: 13px;
  margin: 6px 0 0 5px;
  border: 1px solid #fff;
  background: #e8e8e8;
  color: #000;
  line-height: 9px;
`;

const LayerPanel = styled.section`
  background: #f0f0f0;
  border: 1px solid #fff;
  color: #000;
`;

const LayerTools = styled.div`
  height: 36px;
  display: flex;
  align-items: center;
  padding: 0 8px 10px 12px;
  button {
    width: 26px;
    display: flex;
    justify-content: center;
  }
  input {
    width: 69px;
    height: 19px;
    margin-left: auto;
    border: 1px solid #7a7a7a;
    background: #fff;
  }
`;

const Tree = styled.div`
  margin: 0 8px;
  height: 362px;
  border: 1px solid #6e6e6e;
  display: grid;
  grid-template: 1fr 16px / 1fr 16px;
  overflow: hidden;
  background: #fff;
`;

const TreeList = styled.ul`
  overflow: hidden;
  padding-left: 7px;
  font-family: "Liberation Serif", "Noto Sans CJK SC", serif;
`;

const TreeItem = styled.li`
  position: relative;
  height: 16px;
  display: flex;
  align-items: center;
  white-space: pre;
  &::before {
    content: "";
    position: absolute;
    left: 4px;
    top: 0;
    bottom: 0;
    border-left: 1px dotted #888;
  }
  &::after {
    content: "";
    position: absolute;
    left: 5px;
    width: 10px;
    border-top: 1px dotted #888;
  }
`;

const Expand = styled.button`
  position: relative;
  z-index: 1;
  width: 9px;
  height: 9px;
  margin-right: 6px;
  border: 1px solid #919191;
  background: linear-gradient(#335, #335) center / 5px 1px no-repeat,
    linear-gradient(#335, #335) center / 1px 5px no-repeat, #fff;
  visibility: ${(p) => (p.$show ? "visible" : "hidden")};
`;

const Check = styled.input`
  appearance: none;
  width: 13px;
  height: 13px;
  margin: 0 1px 0 0;
  border: 1px solid #333;
  background: #fff;
  &:checked::after {
    content: "";
    display: block;
    width: 5px;
    height: 9px;
    margin: 0 0 0 3px;
    border: solid #333;
    border-width: 0 1px 1px 0;
    transform: rotate(42deg);
  }
`;

const LayerColor = styled.span`
  width: 14px;
  height: 14px;
  margin-right: 5px;
  padding: 1px;
  border: 1px solid #a0a0a0;
  background: ${(p) => p.$color} content-box;
`;

const LayerName = styled.label`
  min-width: 90px;
`;

const VScroll = styled.div`
  display: flex;
  flex-direction: column;
  align-items: center;
  padding: 4px 0;
  background: #f0f0f0;
  svg:last-child { margin-top: auto; }
`;

const HScroll = styled.div`
  grid-column: 1 / 3;
  display: flex;
  align-items: center;
  padding: 0 22px 0 4px;
  background: #f0f0f0;
  svg:last-child { margin-left: auto; }
`;

const Thumb = styled.span`
  width: ${(p) => p.$w}px;
  height: ${(p) => p.$h}px;
  margin: ${(p) => (p.$h > p.$w ? "3px 0 0" : "0 0 0 4px")};
  background: #cdcdcd;
`;

const PanelTabs = styled.div`
  height: 24px;
  margin-top: 14px;
  display: flex;
  button {
    display: flex;
    align-items: center;
    gap: 5px;
    padding: 0 7px;
    border-right: 1px solid #d8d8d8;
    white-space: nowrap;
  }
  button:first-child { background: #fff; }
  button:nth-child(4) { padding: 0 1px 0 4px; }
`;

const TabArrow = styled.span`
  width: 15px;
  height: 16px;
  align-self: center;
  border: 1px solid #bbb;
  font-size: 8px;
  line-height: 14px;
  text-align: center;
`;

const Props = styled.section`
  flex: 1;
  min-height: 0;
  margin-top: 2px;
  display: flex;
  flex-direction: column;
  background: #5b5b5b;
  color: #fff;
  h2 {
    margin: 0;
    height: 22px;
    padding-left: 15px;
    font-size: 12px;
    font-weight: 400;
    line-height: 22px;
    background: #505050;
  }
`;

const SelectRow = styled.div`
  display: flex;
  align-items: center;
  gap: 9px;
  padding: 10px 10px 3px 17px;
  button { display: flex; }
`;

const ObjectSelect = styled.label`
  width: 152px;
  height: 24px;
  display: flex;
  align-items: center;
  padding-right: 3px;
  border: 1px solid #333;
  background: linear-gradient(#6c6c6c, #7c7c7c);
  select {
    flex: 1;
    min-width: 0;
    height: 22px;
    margin-right: 3px;
    border: 0;
    border-right: 1px solid #444;
    padding: 0 2px;
    appearance: none;
    background: transparent;
  }
`;

const PropsScroll = styled.div`
  flex: 1;
  min-height: 0;
  margin-bottom: 14px;
  padding: 0 11px 0 17px;
  overflow: hidden;
  position: relative;
  &::before {
    content: "";
    position: absolute;
    left: 3px;
    top: 0;
    width: 5px;
    height: 199px;
    border-radius: 3px;
    background: #444;
  }
`;

const GroupHead = styled.h3`
  margin: 0;
  height: 22px;
  padding: 0 8px 0 6px;
  display: flex;
  align-items: center;
  justify-content: space-between;
  border: 1px solid #333;
  background: #484848;
  font-size: 12px;
  font-weight: 700;
`;

const PropTable = styled.table`
  width: calc(100% - 18px);
  margin: 0 0 2px 18px;
  th, td {
    height: 21px;
    padding: 0 2px;
    border: 1px solid #4d4d4d;
    font-weight: 400;
    text-align: left;
    line-height: 18px;
    white-space: nowrap;
  }
  tr:first-child > * { border-top: 0; }
  th { width: 93px; padding-left: 5px; }
`;

const Value = styled.span`
  display: flex;
  align-items: center;
  color: ${(p) => (p.$dim ? "#aaa" : "#fff")};
`;

const Rule = styled.span`
  width: 48px;
  height: ${(p) => p.$h}px;
  margin: 0 5px 0 1px;
  background: #fff;
`;

const Center = styled.div`
  flex: 1;
  min-width: 0;
  margin-left: 2px;
  display: flex;
  flex-direction: column;
`;

const Workspace = styled.div`
  flex: 1;
  min-height: 0;
  display: flex;
  gap: 4px;
  padding-right: 5px;
`;

const ToolColumn = styled.div`
  width: 25px;
  flex: none;
  display: flex;
  flex-direction: column;
  gap: 1px;
  overflow: hidden;
`;

const VBar = styled.div`
  flex: none;
  display: flex;
  flex-direction: column;
  align-items: center;
  border: 1px solid #383838;
  background: #5a5a5a;
  &::before {
    content: "";
    ${grip}
    width: 15px;
    height: 6px;
    margin: 1px 0 0;
  }
  hr {
    width: 19px;
    height: 1px;
    margin: 3px 0 2px;
    border: 0;
    background: #eee;
  }
`;

const Canvas = styled.div`
  position: relative;
  flex: 1;
  min-width: 0;
  overflow: hidden;
  background: #8a8a8a;
  > svg { width: 100%; height: 100%; }
`;

const NavBar = styled.div`
  position: absolute;
  right: 3px;
  top: 210px;
  width: 35px;
  height: 136px;
  padding: 4px;
  border: 2px solid #777;
  border-radius: 5px;
  background: #a2a2a2;
`;

const Command = styled.section`
  height: 105px;
  margin: 3px 2px 1px 0;
  flex: none;
  display: flex;
  border: 1px solid #777;
`;

const CommandGrip = styled.div`
  width: 21px;
  flex: none;
  display: flex;
  flex-direction: column;
  align-items: center;
  gap: 9px;
  padding-top: 4px;
  background: linear-gradient(#8c8c8c, #3c3c3c);
  &::before {
    content: "";
    width: 17px;
    height: 5px;
    background-image: radial-gradient(#ccc 40%, transparent 45%);
    background-size: 3px 3px;
  }
`;

const CommandBody = styled.div`
  flex: 1;
  min-width: 0;
  display: flex;
  flex-direction: column;
`;

const History = styled.div`
  flex: 1;
  padding: 3px 2px;
  background: #c8c8c8;
  color: #000;
  font-size: 13px;
  line-height: 15px;
  white-space: pre;
  div { height: 15px; }
`;

const Mono = styled.span`
  font-family: "Liberation Mono", monospace;
  font-size: 12px;
`;

const CommandLine = styled.label`
  height: 23px;
  display: flex;
  align-items: center;
  gap: 5px;
  padding: 0 0 1px 5px;
  border-top: 1px solid #777;
  background: #fff;
  input {
    flex: 1;
    height: 20px;
    padding: 0 4px;
    border: 0;
    background: none;
    font-size: 13px;
    font-style: italic;
  }
  input::placeholder { color: #999; }
`;

const RightPanel = styled.aside`
  width: 220px;
  flex: none;
  display: flex;
  flex-direction: column;
  padding-top: 2px;
  color: #fff;
`;

const PanelHead = styled.div`
  height: 24px;
  padding: 6px 5px;
  border-bottom: 2px solid #5c5c5c;
  border-radius: 4px 4px 0 0;
  background: #515151;
  &::before {
    content: "";
    display: block;
    ${grip}
    width: 6px;
    height: 10px;
    opacity: 0.6;
  }
`;

const PanelBody = styled.div`
  flex: 1;
  min-height: 0;
  margin-bottom: 3px;
  display: flex;
  background: #484848;
`;

const Palette = styled.div`
  flex: 1;
  background: #3c3c3c;
`;

const ViewTabs = styled.div`
  height: 15px;
  display: flex;
  padding-left: 14px;
  border: 1px solid #2c2c2c;
  background: #484848;
  button {
    width: 20px;
    display: flex;
    align-items: center;
    justify-content: center;
  }
  button:nth-child(2) { background: #2c2c2c; }
`;

const PaletteItem = styled.button`
  position: relative;
  display: block;
  width: 100%;
  height: 28px;
  padding: 0 0 1px 11px;
  border-bottom: 1px solid #323232;
  background: #464646;
  font-size: 13px;
  text-align: center;
  &::after {
    content: "";
    position: absolute;
    right: 0;
    bottom: 2px;
    border: 4px solid #808080;
    border-top-color: transparent;
    border-left-color: transparent;
  }
`;

const SideTabs = styled.div`
  width: 30px;
  display: flex;
  flex-direction: column;
  &::before {
    content: "";
    height: 15px;
    border: 1px solid #2c2c2c;
    background: radial-gradient(#222 40%, transparent 45%) 0 0 / 3px 3px content-box;
    padding: 4px 7px;
  }
`;

const SideTab = styled.button`
  height: 64px;
  margin-right: 1px;
  padding: 0 7px;
  border: solid #303030;
  border-width: 0 1px 1px;
  box-shadow: inset 0 2px 0 ${(p) => (p.$active ? "#464646" : "#757575")};
  background: ${(p) => (p.$active ? "#464646" : "#5f5f5f")};
  line-height: 15px;
  word-break: break-all;
`;

const StatusBar = styled.footer`
  height: 29px;
  flex: none;
  display: flex;
  justify-content: flex-end;
  align-items: flex-start;
  gap: 1px;
  padding-right: 1px;
  background: linear-gradient(90deg, #383838 61%, #505050 61%);
  color: #fff;
`;

const StatusGroup = styled.div`
  height: 26px;
  width: ${(p) => p.$w}px;
  display: flex;
  align-items: center;
  justify-content: ${(p) => (p.$flush ? "space-between" : "space-around")};
  padding: ${(p) => (p.$flush ? "0 0 0 6px" : "0 3px")};
  border: 1px solid #808080;
  background: #5a5a5a;
  white-space: nowrap;
  button { display: flex; align-items: center; }
`;

const Coords = styled.span`
  width: 182px;
  height: 24px;
  padding-right: 6px;
  border-left: 1px solid #808080;
  line-height: 24px;
  text-align: right;
`;

const Taskbar = styled.footer`
  height: 40px;
  flex: none;
  display: flex;
  background: linear-gradient(90deg, #2c3a45, #2b3b45 60%, #263846);
  color: #fff;
`;

const Task = styled.button`
  width: 49px;
  height: 40px;
  display: flex;
  align-items: center;
  justify-content: center;
  background: ${(p) => (p.$active ? "#596771" : "none")};
  box-shadow: ${(p) =>
    p.$open ? "inset 4px 0 0 #2c3a45, inset -4px 0 0 #2c3a45, inset 0 -3px 0 #76b9ed" : "none"};
`;

const Tray = styled.div`
  margin-left: auto;
  display: flex;
  align-items: center;
  padding-right: 8px;
  > button {
    width: 24px;
    height: 40px;
    display: flex;
    align-items: center;
    justify-content: center;
  }
  > button:nth-last-child(3) { width: 34px; }
  > button:last-child { width: 45px; }
`;

const Clock = styled.time`
  width: 74px;
  font-size: 12px;
  line-height: 19px;
  text-align: center;
`;

const Notice = styled.button`
  position: relative;
  span {
    position: absolute;
    left: 21px;
    top: 20px;
    width: 16px;
    height: 16px;
    border-radius: 8px;
    background: #3c4248;
    border: 1px solid #ccc;
    font-size: 11px;
    line-height: 14px;
  }
`;

// floats over the docked panels
const Ime = styled.div`
  position: absolute;
  right: 0;
  bottom: 131px;
  width: 188px;
  height: 27px;
  padding-left: 18px;
  display: flex;
  align-items: center;
  border: 1px solid #b8cce4;
  background: #fff;
  color: #0d6fe0;
  font-size: 14px;
  font-weight: 700;
  > button {
    width: 24px;
    display: flex;
    justify-content: center;
  }
  > svg {
    position: absolute;
    left: -15px;
    top: -5px;
  }
`;

const Mark = styled.div`
  position: absolute;
  left: 5px;
  top: 1003px;
  width: 312px;
  height: 43px;
  border: 2px solid #ed1c24;
  pointer-events: none;
`;

const ArrowMark = styled.svg`
  position: absolute;
  left: 275px;
  top: 855px;
  pointer-events: none;
`;

// ---------------------------------------------------------------- drawing

// blends two guide lines into n contour lines
const between = (a, b, n, wob = 0) =>
  Array.from({ length: n }, (_, k) => {
    const t = k / n;
    return a.map(([x, y], i) => [
      x + (b[i][0] - x) * t + Math.sin(k * 1.7 + i * 2.3) * wob,
      y + (b[i][1] - y) * t + Math.cos(k * 1.1 + i) * wob,
    ]);
  });

const smooth = (pts) => {
  let d = `M${pts[0][0].toFixed(1)} ${pts[0][1].toFixed(1)}`;
  for (let i = 0; i < pts.length - 1; i++) {
    const p0 = pts[i - 1] || pts[i];
    const p1 = pts[i];
    const p2 = pts[i + 1];
    const p3 = pts[i + 2] || p2;
    const c = [
      p1[0] + (p2[0] - p0[0]) / 6, p1[1] + (p2[1] - p0[1]) / 6,
      p2[0] - (p3[0] - p1[0]) / 6, p2[1] - (p3[1] - p1[1]) / 6,
      p2[0], p2[1],
    ].map((v) => v.toFixed(1));
    d += `C${c.join(" ")}`;
  }
  return d;
};

const straight = (pts) => "M" + pts.map((p) => p.map((v) => v.toFixed(1)).join(" ")).join("L");

const range = (n, fn) => Array.from({ length: n }, (_, k) => fn(k)).join("");

const GUIDES = [
  [[165, 210], [163, 300], [170, 400], [160, 500], [170, 600], [160, 700], [170, 860], [160, 980]],
  [[240, 90], [250, 250], [262, 400], [290, 520], [260, 640], [250, 760], [235, 870], [220, 980]],
  [[255, 90], [265, 250], [310, 400], [370, 550], [430, 640], [400, 720], [330, 860], [310, 980]],
  [[375, 90], [372, 250], [378, 400], [425, 520], [590, 620], [500, 700], [400, 860], [350, 980]],
  [[500, 90], [420, 250], [410, 400], [490, 520], [640, 585], [710, 690], [640, 820], [530, 980]],
  [[670, 90], [660, 250], [560, 420], [640, 540], [740, 680], [790, 800], [780, 900], [800, 980]],
  [[690, 150], [720, 300], [760, 480], [820, 620], [860, 740], [890, 840], [910, 920], [930, 980]],
  [[850, 360], [880, 420], [930, 540], [970, 660], [1000, 740], [1020, 830], [1060, 920], [1090, 980]],
];
const COUNTS = [8, 6, 34, 11, 12, 14, 16];
const CONTOURS = COUNTS.flatMap((n, i) => between(GUIDES[i], GUIDES[i + 1], n, i === 2 ? 2 : 6))
  .map(smooth)
  .join("");

// rings round the upper left corner, the terraces below it and the hill
const CORNER = range(9, (k) => `M${200 + k * 11} 90q${-6 - k} ${30 + k * 6}-60 ${40 + k * 11}`);
const TERRACES = range(13, (k) => {
  const y = 650 + k * 24;
  return `M163 ${y}q50 ${-30 + (k % 3) * 8} 90 ${-20}t110 ${-18 + (k % 4) * 6}`;
});
const HILL = range(11, (k) => {
  const y = 700 + k * 14;
  return `M${345 - k * 3} ${y + 8}q40 ${-24 + (k % 3) * 6} 80 -6t${70} 4t${60} 2t${60 + k * 3} ${-10 - k}`;
});

const LEFT_GUIDES = [
  [[85, 95], [80, 230], [20, 420], [40, 470], [60, 600], [-40, 720], [-90, 850], [-90, 980]],
  [[225, 95], [222, 260], [150, 400], [175, 500], [165, 620], [80, 740], [30, 880], [30, 980]],
  [[350, 95], [350, 220], [298, 320], [310, 480], [240, 620], [200, 760], [160, 900], [170, 980]],
  [[440, 95], [400, 280], [405, 430], [380, 600], [383, 740], [300, 850], [320, 930], [310, 980]],
];
const LEFT_CONTOURS = [4, 5, 4]
  .flatMap((n, i) => between(LEFT_GUIDES[i], LEFT_GUIDES[i + 1], n, 4))
  .map(straight)
  .join("");

const scatter = (seed, n, x0, x1, y0, y1, keep) => {
  let s = seed;
  const next = () => (s = (s * 16807) % 2147483647) / 2147483647;
  let d = "";
  for (let i = 0; i < n; i++) {
    const x = x0 + next() * (x1 - x0);
    const y = y0 + next() * (y1 - y0);
    if (!keep || keep(x, y)) d += `M${x.toFixed(0)} ${y.toFixed(0)}l5 7-3 2 6 6-2 3 6 5m-3-19l6 8-2 3`;
  }
  return d;
};
const LABELS = scatter(77, 330, 170, 1290, 110, 970, (x, y) => y > x * 0.85 - 260 && !(x > 240 && x < 400 && y < 600));
const LEFT_LABELS = scatter(31, 110, 70, 450, 110, 960);

const CALLOUTS = [
  [730, 262], [895, 407], [993, 567], [1102, 530], [1320, 547], [1308, 660],
  [1066, 722], [1138, 715], [858, 750], [1164, 937],
];

const COLUMNS = [797, 862, 931, 1000, 1069, 1138, 1207, 1276, 1345, 1414];

const NOTE_LINES =
  "M192 815h36M192 871h28M248 845h66m5 0h80m14 0h20m8 0h82m35 0h60m45 0h98m10 0h42M244 898h54m38 0h12m12 0h114M244 924h68m34 0h46M244 950h154m10 0h214";

const Notes = () => (
  <g stroke="#f0f">
    <path d={NOTE_LINES} strokeWidth="20" strokeDasharray="4 3 6 2 3 4 8 3" />
    <path d={NOTE_LINES} strokeWidth="12" strokeDasharray="13 1 7 1 16 1 9 1" />
    <path d="M234 854h6M230 902h6M230 930h6M230 956h6M230 822h4M246 874h6" strokeWidth="6" />
  </g>
);

const Drawing = () => (
  <svg viewBox="283 100 1383 802" preserveAspectRatio="xMinYMin slice" fill="none">
    <defs>
      <clipPath id="sheet"><path d="M162 90h1318v892H162z" /></clipPath>
      <clipPath id="sheetLeft"><path d="M60 95h400v888H60z" /></clipPath>
      <linearGradient id="shade">
        <stop offset="0" stopColor="#8a8a8a" />
        <stop offset="1" stopColor="#6e6e6e" />
      </linearGradient>
    </defs>

    {/* neighbour sheet */}
    <g transform="translate(260 440) scale(.33333)" stroke="#000">
      <g clipPath="url(#sheetLeft)">
        <path d={LEFT_CONTOURS} stroke="#bebebe" strokeWidth="6" />
        <path d="M455 150L430 260l13 180-30 140 7 160-12 80 20 60M378 740v120q20 90 50 70l20-60" stroke="#bebebe" strokeWidth="6" />
        <path d={LEFT_LABELS} stroke="#bebebe" strokeWidth="5" />
        <ellipse cx="248" cy="406" rx="144" ry="240" stroke="#7c7c7c" strokeWidth="3" />
      </g>
      <path d="M0 55h497v1021H0" strokeWidth="3" />
      <path d="M0 90h462v951H0" strokeWidth="5" />
      <path d="M0 985h462M0 1012h462M118 985v56M187 985v56M253 985v56M322 985v56M391 985v56" strokeWidth="3" />
      <path d="M225 109q20-2 30 15l15 38 38 12M225 109l128 96" strokeWidth="4" />
      <path d="M353 205l-32-14 12-8z" fill="#000" />
      <g transform="translate(-274 -2)"><Notes /></g>
      <path d="M118 1078v261h150zM118 1315h24v24M124 1156l20 18 18-20M143 1174v19M201 1297l38 37M239 1297l-38 37" stroke="#1c4ae0" strokeWidth="4" />
    </g>

    {/* paper */}
    <path d="M648 304h12v600h-12z" fill="url(#shade)" />
    <path d="M1170 304h5v600h-5z" fill="#7c7c7c" />
    <path d="M660 298h510v610H660z" fill="#fff" />
    <path d="M674.500 908V311.500h481V908" stroke="#999" strokeDasharray="6 3" />

    <g transform="translate(650 440) scale(.33333)" stroke="#000">
      <g clipPath="url(#sheet)">
        <path d={CONTOURS + CORNER + TERRACES + HILL} stroke="#c0c0c0" strokeWidth="4" />
        <path d={LABELS} stroke="#bcbcbc" strokeWidth="5" />
        <path d="M945 335l5 120q60 120 120 130h60M985 320l-20 90 50 110 60 30M1015 320l-50 100M1160 425l-20 80-70 60M1190 440l-20 110-60 30M1245 175l25 60M1290 262l80-22M1030 600l140-20 20 80-130 30M1060 600v80M1100 590v80M1140 585v80M1220 488v150M1220 488h35M1440 640l40-10M1440 690l40-30M1400 760q80-40 80-60M1260 880h105M1280 912h85M1380 790q30 20 20 80l80 12M1380 560v60l50 30M1440 700v140h40M915 550l60-16 90 120M1200 490v100M1120 850l100 130M1180 820l60 160M1000 760l110 220" stroke="#c0c0c0" strokeWidth="4" />
        <path d="M880 382h8M994 378h8M1056 400h8M1098 420h8M1140 356h8M1184 334h8M1134 400h8M1034 466h8M1100 486h8M1162 508h8M1186 548h8M1080 444h8" stroke="#aaa" strokeWidth="6" />
        <path d="M1036 360l18 14M1070 366l20 18M1016 415l18 20M1010 498l30 26M1295 200l18 18" stroke="#c0c0c0" strokeWidth="12" strokeDasharray="5 3" />
        {/* dashed boundary and road */}
        <path d="M162 195Q330 250 456 90" stroke="#888" strokeWidth="4" />
        <path d="M372 170l165 182M520 92l140 146" stroke="#777" strokeWidth="3" strokeDasharray="14 8" />
        <g stroke="#828282" strokeWidth="4">
          <path d="M437 178l42-38 190 160-110 108-6-98 70-65 46 44-130 66zM437 178l170 170 62-50M538 352l120-110" />
          <path d="M560 405l70 30 90 105 70 30 28 35h40M640 290l100 120 32 52 70 50 62 40 10 50" />
          <path d="M570 320l75 70 290 260 90 100q50 50 110 50 80-10 160-70l30-60M600 350l300 280 100 110q60 70 150 60 100-20 170-90" />
          <path d="M610 360l270 290 120 130q70 90 160 78 80-20 130-50M650 320l290 310 80 80 90 70q60 0 100-30l90-70q10-50-5-90" />
          <path d="M1230 380q-4-60 14-100l26-40M1253 380q0-60 10-90l30-26M1230 380l14 60-32 230 40-135h18l30 80-4 40-80 56M1253 380l8 50 40 120 20 90 90 30h70M1175 740l150-60 100 5M1200 830l50-35-35-30zM1310 715l-70 85M1165 770l140-60" />
        </g>
        <path d="M1195 805l35-35 15 30-40 32z" fill="#999" stroke="#777" strokeWidth="3" />
        <path d="M580 88l28 50-6 32M390 160l55 85 52 23M455 346l58 88 10-4M698 570l-6 30 52 80M862 718l-4 32M1018 838l-8 40 56 88M700 276l30-16M940 524l16-26-2-8M1023 688l30-28M1058 706l8 14M1115 700l20 14M1168 670l-6-50M1175 337l68 98 44 2 56 87M1276 515l42 30M1375 560l54 80-20 26M1308 660l16-32M1421 708l60 78M1148 912l12 20M1272 838l28 26 52 86" stroke="#0ff" strokeWidth="4" />
        {CALLOUTS.map(([x, y]) => (
          <g key={`${x}-${y}`}>
            <path d={`M${x + 2} ${y + 24}l42 62M${x + 20} ${y + 10}l44 66`} stroke="#ff0" strokeWidth="12" strokeDasharray="6 2 4 2" />
            <path d={`M${x} ${y}l57 85`} stroke="#0ff" strokeWidth="5" />
            <path d={`M${x - 8} ${y + 12}l14 8m-10 4l6-16M${x + 8} ${y}l14 8m-10 4l6-16`} stroke="#f00" strokeWidth="5" />
          </g>
        ))}
        <path d="M601 170L497 268l26 160 175 140 320 270 130 72 124-72 149-132-12-42-82-34-52-112-13-86-18 2-76 236-53 30-57 6-35-18-83-164z" stroke="#f00" strokeWidth="4" />
        <path d="M1265 284l22-4 4-16 14 2 14-2-6 14-4 14-12 2-16 12-2-16z" fill="#000" stroke="#000" strokeWidth="2" />
        <Notes />
      </g>
      <path d="M74 52h1443v1020H74z" strokeWidth="4" />
      <path d="M161 87h1321v951H161z" strokeWidth="6" />
      <path d="M161 982h1321M418 1010h1064M418 982v56" strokeWidth="4" />
      {COLUMNS.map((x) => (
        <path key={x} d={`M${x} 982v56`} strokeWidth="4" />
      ))}
      <path d="M166 1022l16-24h20l-4 24z" fill="#000" />
      <path d="M206 1010h206" strokeWidth="18" strokeDasharray="5 3 3 2 8 3" />
      <path d="M206 1010h206" strokeWidth="8" strokeDasharray="12 2" />
    </g>

    <path d="M547 275h774v559H547z" stroke="#ed1c24" strokeWidth="2" />
    <path d="M1383 861.500h45M1435 861.500h45M1431.500 813v45M1431.500 865v40M1428.500 858.500h6v6h-6z" stroke="#000" />
  </svg>
);

// ---------------------------------------------------------------- data

const MENUS = [
  "文件(F)", "工具(T)", "编辑(E)", "显示(V)", "数据(D)", "绘图处理(W)", "地籍(J)", "土地利用(L)",
  "等高线(S)", "地物编辑(A)", "检查入库(G)", "工程应用(C)", "其他应用(M)", "质检模块(K)",
  "纬衡出图系统(V)", "HNCDI云协同",
];

const ROW1 = [
  "t3d cube cube2 cloud",
  "layers layers2 | # | weight | open save | pencil hand zoom zoomWin zoomExt zoomPrev zoomRed | undo v redo v | calc palette | brush move copy trim extend | help",
  "tin | tinPen | triX triA triB triC triD triE grid down | diskLens | penCurve penCirc arcs arcsV arcsX | arcsL",
];
const ROW2 = [
  "boxCheck boxX | t2d t3d | boxBase boxFront | chart | ptNum curveNum wavePen waveAuto | vPlus vX vMove grassPen copyRed boxRed yPen aPen linePt list | disk prism slash rack | gear",
  "nodeA nodeDim nodeR wDark | blueI polyPlus polyX polyMove | nodeBox nodeH nodeDown",
  "brushTile brushAxis",
];
const DRAW = [
  "line xline pline polygon rect arc circle cloudR spline ellipse ellArc insert block point hatch gradient region table textA",
  "code tag chong dots camera railH xy dim zhu - step rectK rail comb scribble n91 circK corner",
];
const MODIFY = [
  "brush copy mirror offset array move rotate scale stretch trim extend breakP breakG join chamfer fillet explode",
  "layerArrow rectLens dimPen copy arcBack zoomWin zoomPrev scale layerX",
];

// [name, description, colour, checked, expandable]
const LAYERS = [
  ["", "", "#fff", 0, 1],
  ["0", "零层", "#fff", 0, 1],
  ["000文字", "", "#0f0", 1, 0],
  ["00基坑标注", "", "#0f0", 1, 0],
  ["01码头平面", "", "#fff", 1, 0],
  ["03    细实线", "", "#0ff", 1, 1],
  ["05标注", "", "#fff", 1, 1],
  ["0SQP-1", "", "#f00", 1, 1],
  ["0SQP-2", "", "#f0f", 1, 1],
  ["0文字", "", "#f0f", 1, 1],
  ["0方案设计", "", "#0f0", 1, 1],
  ["0结构粗线", "", "#fff", 1, 0],
  ["1文字", "", "#f0f", 1, 1],
  ["1标注", "", "#f00", 1, 0],
  ["1细实线", "", "#fff", 1, 1],
  ["1虚线", "", "#0ff", 1, 1],
  ["1轮廓线（水工）", "", "#0f0", 1, 1],
  ["1集BZ", "", "#f0f", 1, 0],
  ["2BZ", "", "#fff", 0, 1],
  ["3DIM", "", "#f00", 1, 0],
  ["ASSIST", "骨架线", "#808080", 1, 1],
  ["BZ", "", "#f0f", 1, 1],
];

const GROUPS = [
  ["常规", [
    ["颜色", "ByLayer", "swatch"], ["图层", "用地红线"], ["线型", "连续", "thin"], ["线型比例", "1"],
    ["线宽", "ByLayer", "thick"], ["透明度", "ByLayer"], ["厚度", "0"],
  ]],
  ["三维效果", [["材质", "ByLayer"], ["阴影显示", "投射和接收阴影"]]],
  ["布局", [["布局名称", "三座渡口平面图"], ["页面设置名", "<无>", "dim"], ["光栅的 DPI", "300"]]],
  ["打印样式", [["打印样式", "ByColor", "dim"], ["打印样式表", "monochrome.ctb"]]],
];

const HISTORY = [
  "**** 没有系统变量更改 ****",
  "命令:",
  "非 Autodesk DWG。  此 DWG 文件由非 Autodesk 开发或许可的软件应用程序保存。 Autodesk 不能保证应用程序兼容性或此文件的完整性。",
  "命令:",
  "命令:",
];

const PALETTE = ["一般房屋", "普通房屋", "特殊房屋", "房屋附属", "支柱墩", "垣栅"];
const SIDE = [
  "文字注记", "定位基础", "水系设施", "居民地", "独立地物", "交通设施", "管线设施", "境界线",
  "地貌土质", "植被土质", "市政部件",
];

// ---------------------------------------------------------------- parts

const LayerSelect = () => (
  <LayerBox>
    <Icon name="bulb" />
    <Icon name="sun" size={14} />
    <Icon name="vpSun" size={15} />
    <Icon name="unlock" size={15} />
    <Swatch />
    <select aria-label="图层">
      <option>用地红线</option>
    </select>
    <svg width="8" height="6" viewBox="0 0 8 6">
      <path d="M1 1l3 4 3-4" fill="none" stroke="#333" />
    </svg>
  </LayerBox>
);

const Toolbar = ({ items }) => (
  <Bar>
    <Grip />
    {items.split(" ").map((name, i) => {
      if (name === "|") return <Sep key={i} />;
      if (name === "#") return <LayerSelect key={i} />;
      if (name === "v") return <InfoButton key={i} $w={13} aria-label="更多"><Caret $color="#333c48" /></InfoButton>;
      return (
        <Tool key={i} aria-label={name}>
          <Icon name={name} />
        </Tool>
      );
    })}
  </Bar>
);

const VToolbar = ({ items }) => (
  <VBar>
    {items.split(" ").map((name, i) =>
      name === "-" ? (
        <hr key={i} />
      ) : (
        <Tool key={i} aria-label={name}>
          <Icon name={name} />
        </Tool>
      )
    )}
  </VBar>
);

const Chevron = ({ d }) => (
  <svg width="9" height="9" viewBox="0 0 9 9">
    <path d={d} fill="none" stroke="#505050" strokeWidth="2" />
  </svg>
);

const LayerTree = () => {
  const [on, setOn] = useState(LAYERS.map((l) => !!l[3]));
  const toggle = (i) => setOn(on.map((v, k) => (k === i ? !v : v)));
  return (
    <Tree>
      <TreeList>
        {LAYERS.map(([name, desc, color, , more], i) => (
          <TreeItem key={i}>
            <Expand $show={more} aria-label="展开" />
            <Check id={`layer${i}`} type="checkbox" checked={on[i]} onChange={() => toggle(i)} />
            <LayerColor $color={color} />
            <LayerName htmlFor={`layer${i}`}>{name}</LayerName>
            {desc}
          </TreeItem>
        ))}
      </TreeList>
      <VScroll>
        <Chevron d="M1 6l3-3 4 3" />
        <Thumb $w={15} $h={105} />
        <Chevron d="M1 3l3 3 4-3" />
      </VScroll>
      <HScroll>
        <Chevron d="M6 1L3 4l3 4" />
        <Thumb $w={133} $h={15} />
        <Chevron d="M3 1l3 3-3 4" />
      </HScroll>
    </Tree>
  );
};

const PropValue = ({ text, kind }) => (
  <Value $dim={kind === "dim"}>
    {kind === "swatch" && <Swatch $gap={6} />}
    {kind === "thin" && <Rule $h={1} />}
    {kind === "thick" && <Rule $h={5} />}
    {text}
  </Value>
);

const Properties = () => (
  <Props>
    <h2>特性</h2>
    <SelectRow>
      <ObjectSelect>
        <select aria-label="选择对象"><option>无选择</option></select>
        <Caret />
      </ObjectSelect>
      <button aria-label="添加到选择集"><Icon name="addSel" /></button>
      <button aria-label="选择"><Icon name="cross" /></button>
      <button aria-label="快速选择"><Icon name="crossBolt" /></button>
    </SelectRow>
    <PropsScroll>
      {GROUPS.map(([title, rows]) => (
        <div key={title}>
          <GroupHead>
            {title}
            <svg width="7" height="2"><path d="M0 1h7" stroke="#fff" strokeWidth="2" /></svg>
          </GroupHead>
          <PropTable>
            <tbody>
              {rows.map(([label, text, kind]) => (
                <tr key={label}>
                  <th scope="row">{label}</th>
                  <td><PropValue text={text} kind={kind} /></td>
                </tr>
              ))}
            </tbody>
          </PropTable>
        </div>
      ))}
    </PropsScroll>
  </Props>
);

const HistoryLine = ({ text }) => (
  <div>
    {text.split(/([ -~]+)/).map((part, i) => (i % 2 ? <Mono key={i}>{part}</Mono> : part))}
  </div>
);

const Navigation = () => (
  <NavBar>
    <svg width="23" height="124" viewBox="0 0 23 124" fill="none" stroke="#8a8a8a" strokeWidth="1.500">
      <path d="M19-1a3 3 0 1 0 .1 0zM18 1l3 3M21 1l-3 3M-2 6h27" strokeWidth="1" />
      <path d="M9 16a8 8 0 1 0 8 9v-6q0-3-3-3zM9 20a5 5 0 1 0 .1 0z" />
      <text x="11" y="37" fontSize="9" fontWeight="700" fill="#7d8790" stroke="none">2D</text>
      <path d="M0 42h24" strokeWidth="1" />
      <path d="M6 64l-5-6 2-2 4 4-2-10h2l3 8V47h2l1 11 3-10 2 1-2 11 4-4 2 1-5 8q-2 4-7 4-4-1-6-5z" />
      <path d="M1 76l14 14M15 75L1 90M1 80v-5h5M10 75h5v5M1 85v5h5M16 85a5 5 0 1 0 .1 0zM19 94l4 4" />
      <path d="M9 105h6l-3 3z" fill="#8a8a8a" />
      <path d="M21 117a3 3 0 1 0 .1 0zM19 120h4" strokeWidth="1" />
    </svg>
  </NavBar>
);

const IconButtons = ({ names }) =>
  names.split(" ").map((name, i) => (
    <button key={i} aria-label={name}>
      {name === "v" ? <Caret /> : <Icon name={name} />}
    </button>
  ));

const App = () => {
  return (
    <Page>
      <GlobalStyle />
      <Header>
        <AppButton aria-label="应用程序菜单">
          <svg width="24" height="26" viewBox="0 0 24 26">
            <path d="M9 0h5l9 22-8 1-3-4-3 5-9-1z" fill="#c21f26" />
            <path d="M9 0l3 12-12 11z" fill="#e2474c" />
            <path d="M14 0l-2 12 11 10z" fill="#9c1218" />
            <path d="M12 11l2 5h-5z" fill="#8f8f8f" />
          </svg>
          <Caret $color="#333c48" />
        </AppButton>
        <HeaderMain>
          <TitleBar>
            <QuickAccess>
              <Icon name="open" />
              <Caret />
            </QuickAccess>
            <Title>{"南方CASS11     GK-03 平面布置图2025.12.29用地红线.dwg"}</Title>
            <InfoCenter>
              <InfoButton $w={13} aria-label="展开">
                <svg width="4" height="8"><path d="M0 0l4 4-4 4z" fill="#fff" /></svg>
              </InfoButton>
              <Search placeholder="键入关键字或短语" aria-label="搜索" />
              <InfoButton aria-label="查找"><Icon name="binoc" /></InfoButton>
              <InfoButton aria-label="用户"><Icon name="person" /></InfoButton>
              <Login>登录<Caret /></Login>
              <InfoButton aria-label="Exchange"><Icon name="xchg" size={14} /></InfoButton>
              <InfoButton aria-label="A360"><Icon name="a360" /></InfoButton>
              <InfoButton $w={12} aria-label="更多"><Caret /></InfoButton>
              <InfoButton $w={32} aria-label="帮助"><Icon name="helpBlue" /></InfoButton>
              <InfoButton $w={12} aria-label="更多"><Caret /></InfoButton>
            </InfoCenter>
            <WindowButton aria-label="最小化">
              <svg width="10" height="10"><path d="M0 5.500h10" stroke="#888" /></svg>
            </WindowButton>
            <WindowButton aria-label="还原">
              <svg width="10" height="10"><path d="M.5 2.500h7v7h-7zM2.500 2V.5h7v7H8" stroke="#888" fill="none" /></svg>
            </WindowButton>
            <WindowButton aria-label="关闭">
              <svg width="10" height="10"><path d="M0 0l10 10M10 0L0 10" stroke="#888" /></svg>
            </WindowButton>
          </TitleBar>
          <MenuBar>
            {MENUS.map((m) => (
              <a key={m} href="#menu">{m}</a>
            ))}
            <MdiButtons>
              <button aria-label="最小化窗口"><svg width="12" height="10"><path d="M1 8h10" stroke="#222" strokeWidth="2" /></svg></button>
              <button aria-label="还原窗口"><svg width="13" height="11"><path d="M1 4h7v6H1zM4 4V1h8v6H8" stroke="#222" strokeWidth="1.500" fill="none" /></svg></button>
              <button aria-label="关闭窗口"><svg width="12" height="10"><path d="M2 1l7 8M9 1L2 9" stroke="#222" strokeWidth="2" /></svg></button>
            </MdiButtons>
          </MenuBar>
        </HeaderMain>
      </Header>

      <Toolbars>
        <ToolbarRow>{ROW1.map((r) => <Toolbar key={r} items={r} />)}</ToolbarRow>
        <ToolbarRow>{ROW2.map((r) => <Toolbar key={r} items={r} />)}</ToolbarRow>
      </Toolbars>

      <Main>
        <LeftDock>
          <Collapse aria-label="折叠">-</Collapse>
          <LayerPanel>
            <LayerTools>
              {["layC", "pick", "pickBulb", "sheet", "layRed", "checkBig"].map((n) => (
                <button key={n} aria-label={n}><Icon name={n} size={19} /></button>
              ))}
              <input aria-label="筛选图层" />
            </LayerTools>
            <LayerTree />
            <PanelTabs>
              <button><Icon name="sheets" />图层</button>
              <button><Icon name="doc" />属性</button>
              <button><Icon name="folder" />文件管理</button>
              <button aria-label="代码"><Icon name="codeWin" size={13} /></button>
              <TabArrow>◀</TabArrow>
              <TabArrow>▶</TabArrow>
            </PanelTabs>
          </LayerPanel>
          <Properties />
        </LeftDock>

        <Center>
          <Workspace>
            <ToolColumn>{DRAW.map((r) => <VToolbar key={r} items={r} />)}</ToolColumn>
            <Canvas>
              <Drawing />
              <Navigation />
            </Canvas>
            <ToolColumn>{MODIFY.map((r) => <VToolbar key={r} items={r} />)}</ToolColumn>
          </Workspace>
          <Command>
            <CommandGrip>
              <svg width="10" height="10"><path d="M1 1l8 8M9 1L1 9" stroke="#fff" strokeWidth="2" /></svg>
              <Icon name="wrench" />
            </CommandGrip>
            <CommandBody>
              <History>{HISTORY.map((h, i) => <HistoryLine key={i} text={h} />)}</History>
              <CommandLine>
                <Icon name="cmd" size={14} />
                <Caret $color="#888" />
                <input placeholder="键入命令" aria-label="命令" />
              </CommandLine>
            </CommandBody>
          </Command>
        </Center>

        <RightPanel>
          <PanelHead />
          <PanelBody>
            <Palette>
              <ViewTabs>
                <button aria-label="列表"><Icon name="tabList" size={10} /></button>
                <button aria-label="网格"><Icon name="tabGrid" size={10} /></button>
                <button aria-label="定位"><Icon name="tabPin" size={10} /></button>
              </ViewTabs>
              {PALETTE.map((p) => <PaletteItem key={p}>{p}</PaletteItem>)}
            </Palette>
            <SideTabs>
              {SIDE.map((s) => <SideTab key={s} $active={s === "居民地"}>{s}</SideTab>)}
            </SideTabs>
          </PanelBody>
        </RightPanel>
      </Main>

      <StatusBar>
        <StatusGroup $w={253} $flush>
          <span>比例 1:500</span>
          <Coords>2959.4137, -9.7104, 0.0000</Coords>
        </StatusGroup>
        <StatusGroup $w={29}>图纸</StatusGroup>
        <StatusGroup $w={193}><IconButtons names="ortho polar v iso v track osnap v lwt" /></StatusGroup>
        <StatusGroup $w={74}><IconButtons names="vp annot annot2" /></StatusGroup>
        <StatusGroup $w={66}><IconButtons names="gearW v plus" /></StatusGroup>
        <StatusGroup $w={26}><IconButtons names="shapes" /></StatusGroup>
        <StatusGroup $w={26}><IconButtons names="blueC" /></StatusGroup>
        <StatusGroup $w={24}><IconButtons names="warn" /></StatusGroup>
        <StatusGroup $w={50}><IconButtons names="full menu" /></StatusGroup>
      </StatusBar>

      <Taskbar>
        {["win", "search", "taskview", "edge", "explorer", "wps", "clover", "monitor", "dove", "cass"].map((n, i) => (
          <Task key={n} aria-label={n} $open={i > 4 && i < 9} $active={n === "cass"}>
            <Icon name={n} size={i === 0 || i === 2 ? 16 : i === 1 ? 20 : 23} />
          </Task>
        ))}
        <Tray>
          <IconButtons names="up usb swirl volume globe shield net doveC" />
          <button>中</button>
          <button aria-label="输入法"><Icon name="sogou" /></button>
          <Clock>16:51<br />2026/1/5</Clock>
          <Notice aria-label="通知"><Icon name="note" /><span>4</span></Notice>
        </Tray>
      </Taskbar>

      <Ime>
        <Icon name="sogou" size={30} />
        <button>中</button>
        <IconButtons names="punct mic keyboard shirt apps face" />
      </Ime>
      <ArrowMark width="180" height="142">
        <path d="M176 6L28 121" stroke="#ed1c24" strokeWidth="5" strokeLinecap="round" />
        <path d="M5 137l14-23 16 18z" fill="#ed1c24" />
      </ArrowMark>
      <Mark />
    </Page>
  );
};

export default App;
